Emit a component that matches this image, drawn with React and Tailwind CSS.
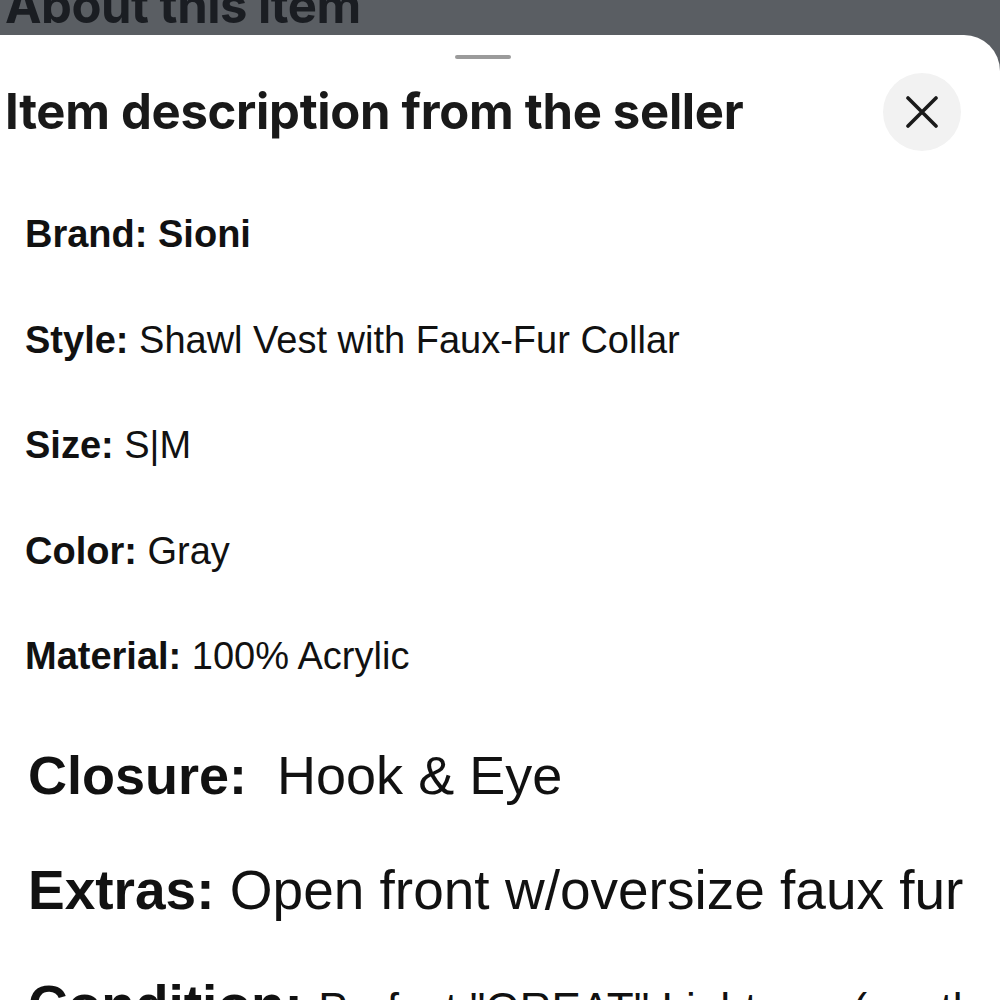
const rows = [
  { label: 'Brand:', value: 'Sioni', bold: true },
  { label: 'Style:', value: 'Shawl Vest with Faux-Fur Collar' },
  { label: 'Size:', value: 'S|M' },
  { label: 'Color:', value: 'Gray' },
  { label: 'Material:', value: '100% Acrylic' },
];

const App = () => {
  return (
    <div className="w-[1000px] h-[1000px] overflow-hidden bg-[#5a5e63]">
      {/* dimmed page behind the sheet */}
      <div className="h-[35px] overflow-hidden">
        <div className="-mt-[24px] pl-[5px] font-['Inter',sans-serif] font-bold text-[49px] leading-[60px] tracking-[-0.5px] text-[#1a1d22]">
          About this item
        </div>
      </div>

      {/* bottom sheet */}
      <div className="h-[965px] bg-white rounded-tr-[36px] overflow-hidden">
        <div className="pt-[20px] pl-[455px]">
          <div className="w-[56px] h-[4px] rounded-full bg-[#9b9b9b]" />
        </div>

        <div className="flex items-center justify-between pl-[5px] pr-[39px] mt-[14px]">
          <h1 className="font-['Inter',sans-serif] font-bold text-[49px] leading-[78px] tracking-[-0.3px] text-[#191919]">
            Item description from the seller
          </h1>
          <button className="w-[78px] h-[78px] rounded-full bg-[#f2f2f2] flex items-center justify-center">
            <svg width="32" height="32" viewBox="0 0 32 32" fill="none" stroke="#1a1a1a" strokeWidth="3.6" strokeLinecap="round">
              <path d="M2 2L30 30M30 2L2 30" />
            </svg>
          </button>
        </div>

        <div className="font-['Liberation_Sans',Arial,sans-serif] text-[#111111] mt-[31px]">
          {rows.map(r => (
            <p key={r.label} className="pl-[25px] text-[38px] leading-[105.5px] whitespace-nowrap">
              <span className="font-bold">{r.label}</span>{' '}
              <span className={r.bold ? 'font-bold' : ''}>{r.value}</span>
            </p>
          ))}

          <p className="pl-[28px] text-[54px] leading-[115px] whitespace-nowrap mt-[8px]">
            <span className="font-bold">Closure:</span>{'\u00a0 '}Hook &amp; Eye
          </p>
          <p className="pl-[28px] text-[55px] leading-[115px] whitespace-nowrap">
            <span className="font-bold">Extras:</span> Open front w/oversize faux fur
          </p>
          <p className="pl-[28px] text-[55px] leading-[115px] whitespace-nowrap">
            <span className="font-bold">Condition:</span>{' '}
            <span className="text-[44px]">Perfect "GREAT" Light use (gently worn)</span>
          </p>
        </div>
      </div>
    </div>
  );
};

export default App;
